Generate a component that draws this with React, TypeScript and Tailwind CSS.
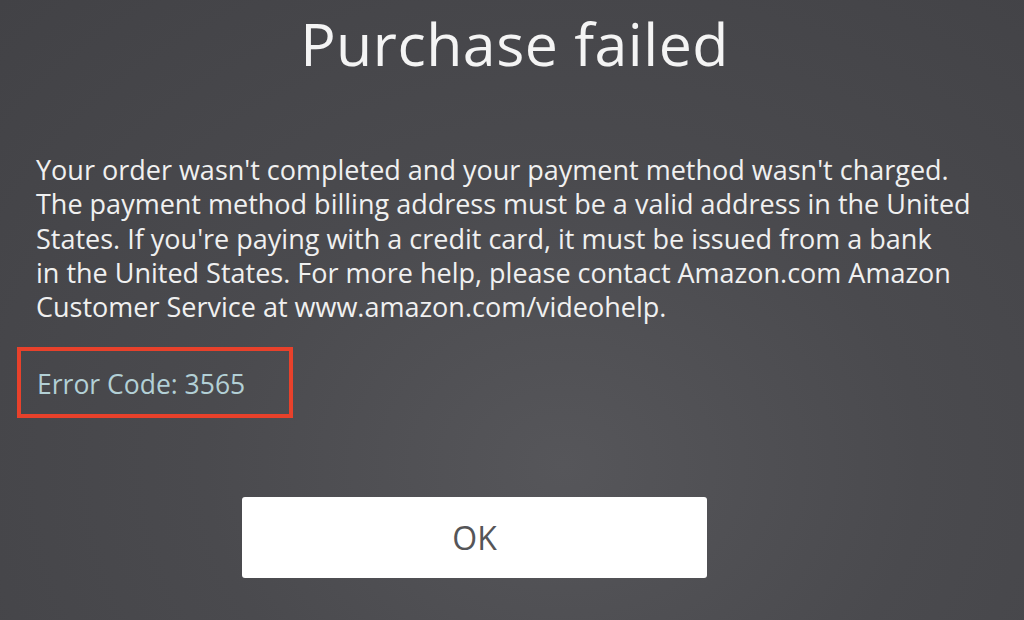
import React from 'react';

const App: React.FC = () => {
  return (
    <div
      className="w-[1024px] h-[620px] overflow-hidden bg-[radial-gradient(ellipse_at_55%_75%,#56565a_0%,#4a4a4e_45%,#424246_100%)] text-white"
      style={{ fontFamily: '"Open Sans", "Noto Sans", sans-serif' }}
    >
      {/* Title */}
      <h1 className="pt-[5px] text-center pl-[5px] text-[59px] leading-[76px] text-[#f4f4f4] tracking-[0.5px]">
        Purchase failed
      </h1>

      {/* Body message */}
      <p className="mt-[72px] pl-[36px] pr-[40px] text-[27px] leading-[34.3px] text-[#f0f0f0]">
        Your order wasn't completed and your payment method wasn't charged.
        <br />
        The payment method billing address must be a valid address in the United
        <br />
        States. If you're paying with a credit card, it must be issued from a bank
        <br />
        in the United States. For more help, please contact Amazon.com Amazon
        <br />
        Customer Service at www.amazon.com/videohelp.
      </p>

      {/* Error code, boxed in red */}
      <div className="mt-[23px] ml-[17px] w-[276px] h-[71px] border-[4px] border-[#e8412b] flex items-center pl-[16px]">
        <span className="text-[26.5px] text-[#b3d0d6] pt-[3px]">Error Code: 3565</span>
      </div>

      {/* OK button */}
      <div className="mt-[79px] ml-[242px] w-[465px] h-[81px] bg-white rounded-[3px] flex items-center justify-center">
        <span className="text-[32px] text-[#555558]">OK</span>
      </div>
    </div>
  );
};

export default App;
